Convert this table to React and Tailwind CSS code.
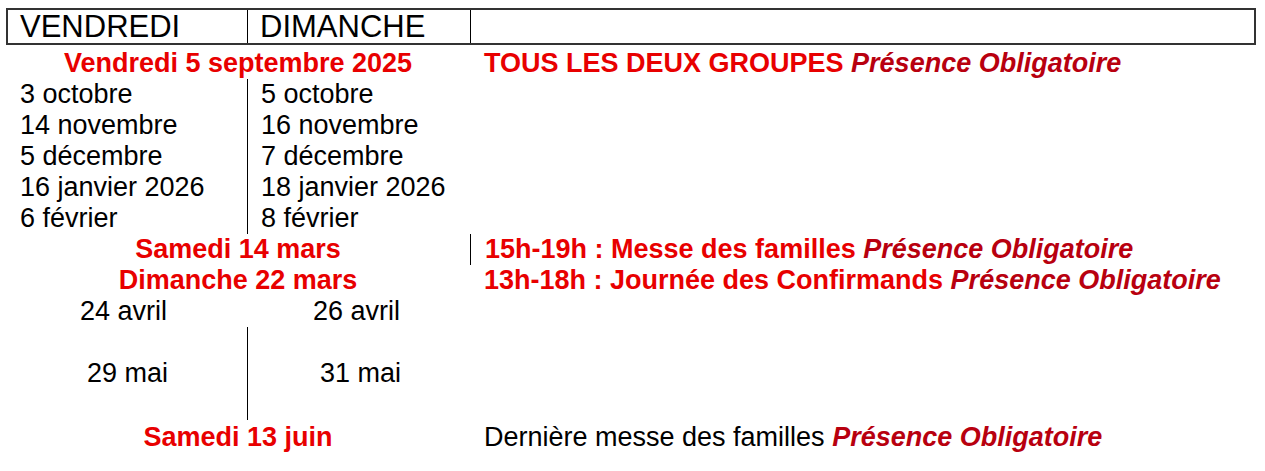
const red = "text-[#e80000]";

function Obl() {
  return <span className="italic font-bold text-[#b8000f]">Présence Obligatoire</span>;
}

function Row({ children, className = "" }) {
  return <div className={`flex h-[31px] leading-[31px] ${className}`}>{children}</div>;
}

function Pair({ left, right, lp = "pl-[14px]", rp = "pl-[13px]", line = true }) {
  return (
    <Row>
      <div className={`w-[241px] ${lp}`}>{left}</div>
      <div className={`w-[223px] ${rp} ${line ? "border-l border-black" : "border-l border-transparent"}`}>{right}</div>
    </Row>
  );
}

function Span({ text, right, line = false }) {
  return (
    <Row>
      <div className={`w-[464px] text-center font-bold ${red}`}>{text}</div>
      <div className={`flex-1 pl-[14px] ${line ? "border-l border-black pl-[13px]" : ""}`}>{right}</div>
    </Row>
  );
}

export default function App() {
  return (
    <div
      className="w-[1265px] h-[471px] bg-white pt-[8px] pl-[6px] text-[27px] text-black overflow-hidden"
      style={{ fontFamily: '"Liberation Sans", Arial, sans-serif' }}
    >
      <div className="flex w-[1250px] h-[37px] border-2 border-[#333] text-[31px] leading-[34px]">
        <div className="w-[239px] pl-[12px]">VENDREDI</div>
        <div className="w-[223px] pl-[12px] border-l border-black">DIMANCHE</div>
        <div className="flex-1 border-l border-black"></div>
      </div>
      <div className="pt-[3px]">
        <Span
          text="Vendredi 5 septembre 2025"
          right={
            <span className={`font-bold ${red}`}>
              TOUS LES DEUX GROUPES <Obl />
            </span>
          }
        />
        <Pair left="3 octobre" right="5 octobre" />
        <Pair left="14 novembre" right="16 novembre" />
        <Pair left="5 décembre" right="7 décembre" />
        <Pair left="16 janvier 2026" right="18 janvier 2026" />
        <Pair left="6 février" right="8 février" />
        <Span
          text="Samedi 14 mars"
          line
          right={
            <span className={`font-bold ${red}`}>
              15h-19h : Messe des familles <Obl />
            </span>
          }
        />
        <Span
          text="Dimanche 22 mars"
          right={
            <span className={`font-bold ${red}`}>
              13h-18h : Journée des Confirmands <Obl />
            </span>
          }
        />
        <Pair left="24 avril" right="26 avril" lp="pl-[74px]" rp="pl-[65px]" line={false} />
        <Pair left="" right="" />
        <Pair left="29 mai" right="31 mai" lp="pl-[81px]" rp="pl-[72px]" />
        <Pair left="" right="" />
        <div className="h-[2px]"></div>
        <Span
          text="Samedi 13 juin"
          right={
            <span>
              Dernière messe des familles <Obl />
            </span>
          }
        />
      </div>
    </div>
  );
}
